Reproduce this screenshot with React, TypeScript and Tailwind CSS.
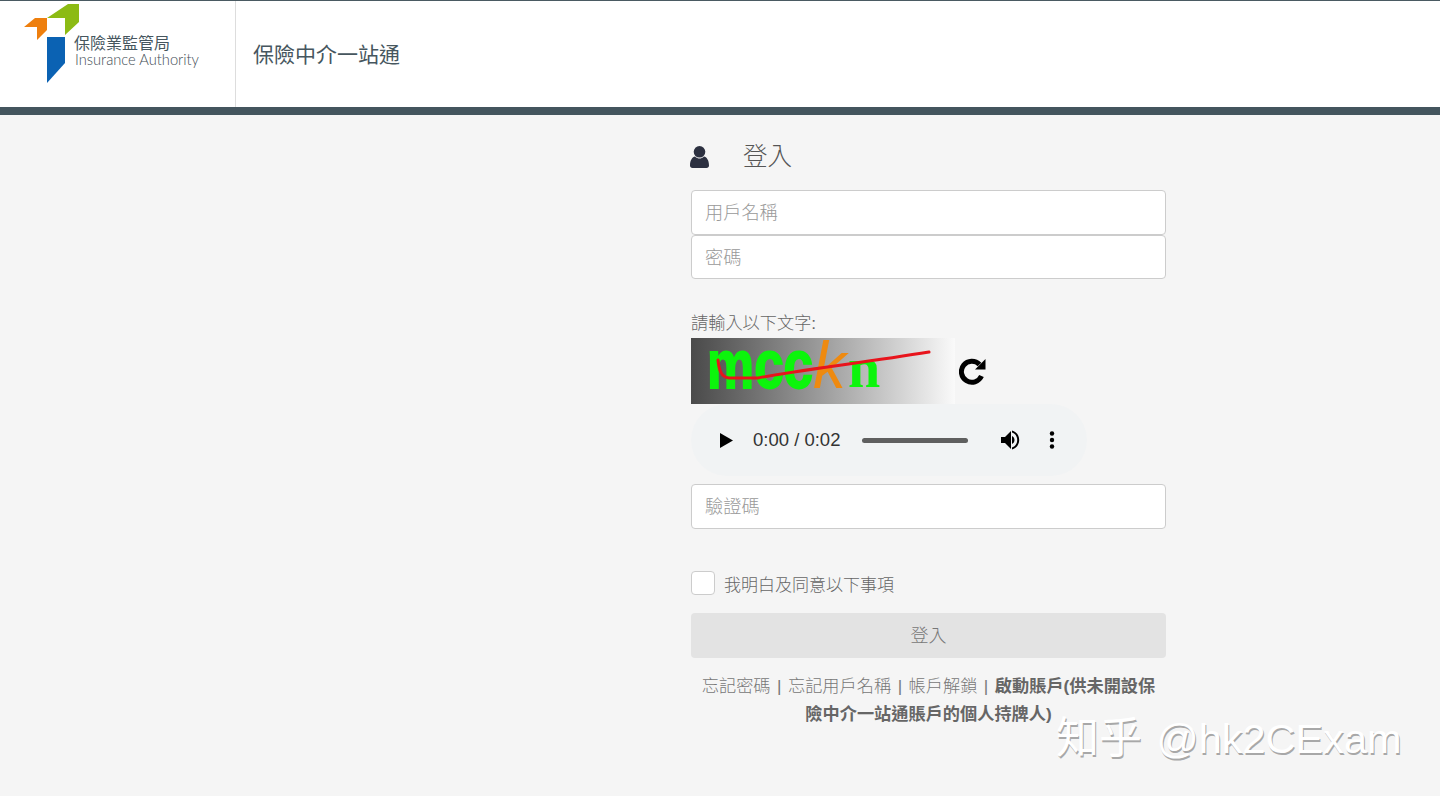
const Field = ({ ph, cls }: { ph: string; cls: string }) => (
  <input
    placeholder={ph}
    className={"block w-full pl-[13px] pr-[14px] bg-white border border-[#cccccc] rounded-[4px] text-[18.2px] font-light text-[#555] placeholder:text-[#999] outline-none " + cls}
  />
);

const Sep = () => <span className="inline-block px-[6.5px] font-light">|</span>;

export default function App() {
  return (
    <div className="min-h-[796px] bg-[#f5f5f5] text-[#666] font-['Liberation_Sans','Noto_Sans_CJK_TC',sans-serif] relative overflow-hidden">
      <header className="h-[115px] bg-white border-t border-[#4a5a62] border-b-[8px] border-b-[#44555e] flex">
        <div className="w-[236px] border-r border-[#dddddd] relative shrink-0">
          <svg className="absolute left-0 top-[-1px]" width="235" height="90" viewBox="0 0 235 90">
            <polygon points="47,18 68,4 79,4 79,22 65,35 65,18" fill="#8cbb14" />
            <polygon points="24,27 35,18 47,18 47,30 37,40 37,27" fill="#ee7f0e" />
            <polygon points="47,37 65,37 65,63 47,83" fill="#0b62b3" />
          </svg>
          <div className="absolute left-[74px] top-[33px] text-[16px] leading-[19px] text-[#46565e]">保險業監管局</div>
          <div className="absolute left-[75px] top-[49px] text-[14.7px] leading-[18px] text-[#3f4d55] font-['Lato','Noto_Sans',sans-serif] font-light whitespace-nowrap">Insurance Authority</div>
        </div>
        <div className="pl-[17px] flex items-center text-[21px] text-[#46565e] pt-[1px]">保險中介一站通</div>
      </header>

      <main className="ml-[691px] w-[475px]">
        <div className="flex items-center h-[44px] mt-[20px] mb-[11px]">
          <svg className="w-[19px] h-[22px] shrink-0 -ml-px" viewBox="0 0 19 22" fill="#2c3040">
            <circle cx="9.500" cy="5.800" r="5.800" />
            <path d="M0 19.500C0 14 2.500 11 5 10.500C6.500 12 8 12.500 9.500 12.500C11 12.500 12.500 12 14 10.500C16.500 11 19 14 19 19.500C19 21 18 22 16.500 22L2.500 22C1 22 0 21 0 19.500Z" />
          </svg>
          <h1 className="ml-[34px] text-[24.5px] font-light text-[#555] pt-[1px]">登入</h1>
        </div>
        <Field ph="用戶名稱" cls="h-[45px] pt-[2px]" />
        <Field ph="密碼" cls="h-[44px] pt-[3px]" />

        <label className="block mt-[30px] mb-[1px] text-[17.2px] font-light leading-[28px]">請輸入以下文字:</label>
        <div className="flex items-center">
          <div className="w-[264px] h-[66px] bg-gradient-to-r from-[#4a4a4a] to-[#fafafa] relative">
            <span className="absolute left-[16px] top-[6.600px] text-[53px] leading-[50px] font-bold text-[#0cf50c] scale-y-[1.3] origin-[0_43.4px] [-webkit-text-stroke:1.500px_#0cf50c]">mcc</span>
            <span className="absolute left-[122px] top-[-6px] text-[66px] leading-[66px] italic text-[#ee8a10]">k</span>
            <span className="absolute left-[157px] top-[1px] text-[58px] leading-[58px] font-['Liberation_Serif',serif] font-bold text-[#0cf50c]">n</span>
            <svg className="absolute inset-0" width="264" height="66" viewBox="0 0 264 66">
              <path d="M27 22 C28 32 30 39 38 40 L67 40 C100 33 170 25 238 14" fill="none" stroke="#e8141c" strokeWidth="3" strokeLinecap="round" />
            </svg>
          </div>
          <svg className="ml-[4px] w-[27px] h-[27px] shrink-0" viewBox="0 0 27 27">
            <path d="M20.500 6.500A10.500 10.500 0 1 0 22.500 18" fill="none" stroke="#000" strokeWidth="5" />
            <polygon points="26.500,1 26.500,11.500 16,11.500" fill="#000" />
          </svg>
        </div>

        <div className="w-[396px] h-[72px] rounded-full bg-[#f1f3f4] flex items-center text-[#333] mb-[8px]">
          <svg className="ml-[29px] w-[13px] h-[15px] shrink-0" viewBox="0 0 13 15"><polygon points="0,0 13,7.500 0,15" fill="#000" /></svg>
          <span className="ml-[20px] text-[18.5px] whitespace-nowrap w-[88px]">0:00 / 0:02</span>
          <div className="ml-[21px] w-[106px] h-[5px] rounded-full bg-[#5f5f5f]" />
          <svg className="ml-[31px] w-[24px] h-[24px] shrink-0" viewBox="0 0 24 24"><path d="M2 9v6h4l6 6V3L6 9H2zm13.500 3c0-1.800-1-3.300-2.500-4v8c1.500-.7 2.500-2.200 2.500-4zM13 2.500v2.100c3 .9 5.200 3.600 5.200 7.400s-2.200 6.500-5.200 7.400v2.100c4.100-.9 7.200-4.900 7.200-9.500S17.100 3.400 13 2.500z" fill="#000" /></svg>
          <svg className="ml-[26px] w-[6px] h-[18px] shrink-0" viewBox="0 0 6 18"><circle cx="3" cy="2.500" r="2.200" /><circle cx="3" cy="9" r="2.200" /><circle cx="3" cy="15.500" r="2.200" /></svg>
        </div>

        <Field ph="驗證碼" cls="h-[44.500px] pt-[2px]" />

        <div className="flex items-center mt-[41px] h-[26px]">
          <span className="w-[24px] h-[24px] bg-white border border-[#cccccc] rounded-[4px] shrink-0" />
          <span className="ml-[9px] text-[17px] font-light mt-[7px]">我明白及同意以下事項</span>
        </div>

        <button disabled className="block w-full h-[45px] mt-[17px] pt-[2px] bg-[#e3e3e3] rounded-[4px] text-[18px] font-light text-[#777]">登入</button>

        <p className="mt-[14px] text-[17.200px] leading-[28.500px] text-center text-[#777] px-[10px]">
          <span className="font-light">忘記密碼</span><Sep /><span className="font-light">忘記用戶名稱</span><Sep /><span className="font-light">帳戶解鎖</span><Sep /><b className="text-[#666]">啟動賬戶(供未開設保險中介一站通賬戶的個人持牌人)</b>
        </p>
      </main>

      <div className="absolute left-[1056px] top-[712px] text-[41.500px] leading-[52px] text-white whitespace-nowrap [text-shadow:1px_2px_0_#a8a8a8]"><span className="text-[43px]">知乎</span><span className="ml-[3px]"> @hk2CExam</span></div>
    </div>
  );
}
